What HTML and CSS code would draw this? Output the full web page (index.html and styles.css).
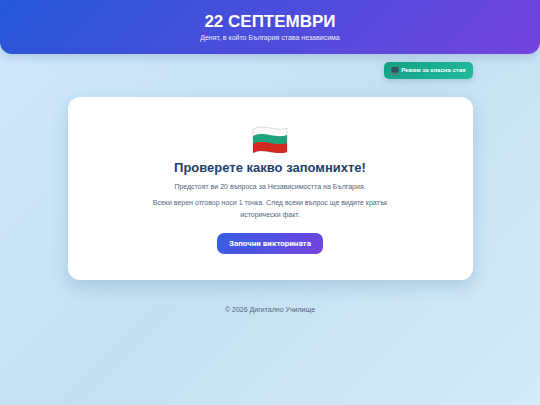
FILE: index.html
```html
<!DOCTYPE html>
<html lang="bg">
<head>
  <meta charset="UTF-8">
  <meta name="viewport" content="width=device-width, initial-scale=1">
  <title>22 септември</title>
  <link rel="stylesheet" href="styles.css">
</head>
<body>
  <header class="site-header">
    <h1>22 СЕПТЕМВРИ</h1>
    <p>Денят, в който България става независима</p>
  </header>

  <div class="container">
    <div class="toolbar">
      <button type="button" class="mode-btn">
        <svg class="mode-icon" viewBox="0 0 16 16" aria-hidden="true">
          <rect x="1" y="0" width="14" height="11" rx="1" fill="#3b4348"/>
          <rect x="2.5" y="1.5" width="11" height="8" fill="#34566f"/>
          <path d="M6 11h4v2H6z" fill="#46525a"/>
          <path d="M3 13h10l2 3H1z" fill="#66757c"/>
        </svg>
        Режим за класна стая
      </button>
    </div>

    <main class="quiz-card">
      <svg class="flag" viewBox="0 0 36 28" role="img" aria-label="Знамето на България">
        <path d="M1 4C7 1 12 2 18 3S29 5 35 3V11C29 13 24 12 18 11S7 9 1 12Z" fill="#fafafa"/>
        <path d="M1 11C7 8 12 9 18 10S29 12 35 10V19C29 21 24 20 18 19S7 17 1 20Z" fill="#1fa37c"/>
        <path d="M1 19C7 16 12 17 18 18S29 20 35 18V27C29 29 24 28 18 27S7 25 1 28Z" fill="#d3281f"/>
        <path d="M1 4C7 1 12 2 18 3S29 5 35 3V27C29 29 24 28 18 27S7 25 1 28Z" fill="none" stroke="#444" stroke-opacity=".3" stroke-width=".6"/>
      </svg>
      <h2>Проверете какво запомнихте!</h2>
      <p>Предстоят ви 20 въпроса за Независимостта на България.</p>
      <p>Всеки верен отговор носи 1 точка. След всеки въпрос ще видите кратък исторически факт.</p>
      <button type="button" class="start-btn">Започни викторината</button>
    </main>
  </div>

  <footer class="site-footer">© 2026 Дигитално Училище</footer>
</body>
</html>
```

FILE: styles.css
```css
* {
  box-sizing: border-box;
  margin: 0;
  padding: 0;
}

body {
  min-height: 100vh;
  font-family: "Liberation Sans", Arial, sans-serif;
  font-size: 7px;
  line-height: 12px;
  color: #52657c;
  background: linear-gradient(135deg, #d0e8fc 0%, #c4e1f1 50%, #d4ebf8 100%);
}

.site-header {
  padding: 12px 12px 10px;
  text-align: center;
  color: #fff;
  background: linear-gradient(135deg, #2457d8, #7443df);
  border-radius: 0 0 12px 12px;
  box-shadow: 0 3px 10px rgba(40, 70, 130, 0.2);
}

.site-header h1 {
  font-size: 17px;
  line-height: 20px;
}

.site-header p {
  line-height: 12px;
  opacity: 0.9;
}

.container {
  width: 75%;
  margin: 0 auto;
}

.toolbar {
  display: flex;
  justify-content: flex-end;
  padding: 8px 0 18px;
}

button {
  border: none;
  color: #fff;
  font-weight: 700;
  cursor: pointer;
}

.mode-btn {
  display: flex;
  align-items: center;
  gap: 2px;
  padding: 0 7px;
  font-family: "Liberation Sans", Arial, sans-serif;
  font-size: 6px;
  line-height: 17px;
  border-radius: 5px;
  background: linear-gradient(135deg, #16a085, #1fbb9a);
  box-shadow: 0 2px 6px rgba(40, 80, 120, 0.2);
}

.mode-icon {
  width: 8px;
  height: 8px;
}

.quiz-card {
  display: flex;
  flex-direction: column;
  align-items: center;
  padding: 28px 26px 26px;
  text-align: center;
  background: #fff;
  border-radius: 12px;
  box-shadow: 0 6px 18px rgba(40, 90, 140, 0.2);
}

.flag {
  width: 36px;
  height: 28px;
  margin-bottom: 6px;
}

.quiz-card h2 {
  margin-bottom: 4px;
  font-size: 13px;
  line-height: 18px;
  color: #243f68;
}

.quiz-card p {
  max-width: 250px;
  margin-bottom: 4px;
}

.start-btn {
  margin-top: 8px;
  padding: 0 12px;
  font-family: Roboto, "Liberation Sans", sans-serif;
  font-size: 8px;
  line-height: 21px;
  border-radius: 7px;
  background: linear-gradient(135deg, #345fe2, #7443df);
}

.site-footer {
  padding: 24px 0;
  text-align: center;
}
```
